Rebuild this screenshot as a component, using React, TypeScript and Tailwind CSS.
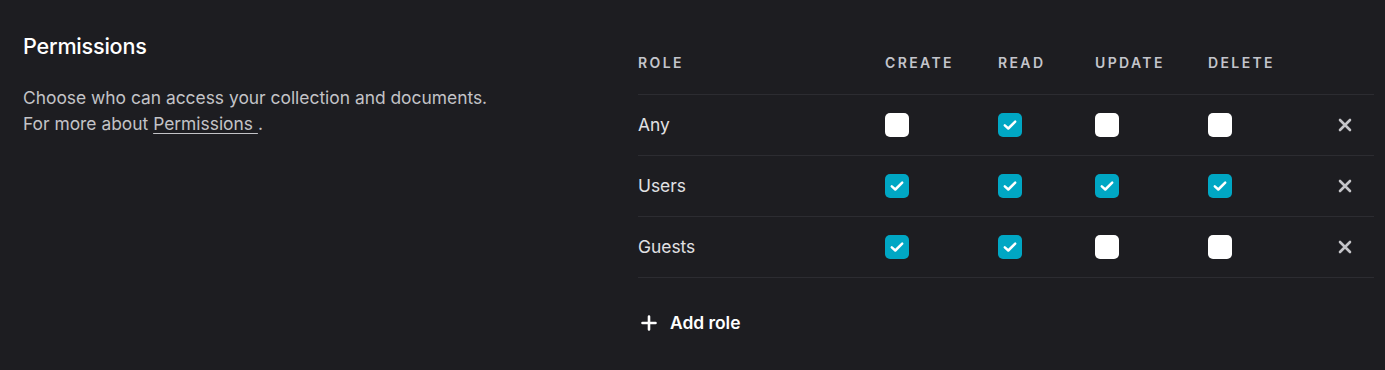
import React from "react";

const F = { fontFamily: "Inter, 'Noto Sans', sans-serif" };

function Box({ on }: { on: boolean }) {
  return on ? (
    <div className="w-6 h-6 rounded-[5px] bg-[#00a7c4] flex items-center justify-center">
      <svg width="16" height="16" viewBox="0 0 16 16" fill="none">
        <path d="M2.8 8.4 L6.3 11.5 L13.2 4.6" stroke="#fff" strokeWidth="2.5" strokeLinecap="round" strokeLinejoin="round" />
      </svg>
    </div>
  ) : (
    <div className="w-6 h-6 rounded-[5px] bg-white" />
  );
}

function XIcon() {
  return (
    <svg width="14" height="14" viewBox="0 0 14 14" fill="none">
      <path d="M2 2 L12 12 M12 2 L2 12" stroke="#c4c4c8" strokeWidth="2.6" strokeLinecap="round" />
    </svg>
  );
}

const rows: [string, boolean[]][] = [
  ["Any", [false, true, false, false]],
  ["Users", [true, true, true, true]],
  ["Guests", [true, true, false, false]],
];

const GRID = "grid grid-cols-[247px_113px_97px_113px_1fr_auto] items-center";

export default function App() {
  return (
    <div className="w-[1385px] h-[370px] bg-[#1d1d21] flex" style={F}>
      <div className="w-[638px] pl-[23px] pt-[32px] shrink-0">
        <h2 className="text-[21.6px] leading-[28px] font-medium text-white tracking-[-0.01em]">Permissions</h2>
        <p className="mt-[25px] text-[17.4px] leading-[26px] text-[#c3c3c7]">
          Choose who can access your collection and documents.
          <br />
          For more about{" "}
          <a className="underline underline-offset-[3px] text-[#c3c3c7]">Permissions </a>.
        </p>
      </div>
      <div className="w-[736px] pt-[52px]">
        <div className={`${GRID} pb-[20px] border-b border-[#2c2c31] text-[14px] leading-[22px] font-semibold tracking-[0.17em] text-[#c4c5cc]`}>
          <div>ROLE</div>
          <div>CREATE</div>
          <div>READ</div>
          <div>UPDATE</div>
          <div>DELETE</div>
          <div />
        </div>
        {rows.map(([name, vals]) => (
          <div key={name} className={`${GRID} h-[61px] border-b border-[#2c2c31]`}>
            <div className="text-[17.4px] text-[#e1e1e4] pt-px">{name}</div>
            {vals.map((v, i) => (
              <div key={i}>
                <Box on={v} />
              </div>
            ))}
            <div className="pr-[22px] flex items-center">
              <XIcon />
            </div>
          </div>
        ))}
        <button className="mt-[33px] flex items-center gap-[13px] text-[17.4px] leading-[24px] font-semibold text-white pl-[3px]">
          <svg width="16" height="16" viewBox="0 0 16 16" fill="none">
            <path d="M8 1.5 V14.5 M1.5 8 H14.5" stroke="#fff" strokeWidth="2.6" strokeLinecap="round" />
          </svg>
          Add role
        </button>
      </div>
    </div>
  );
}
